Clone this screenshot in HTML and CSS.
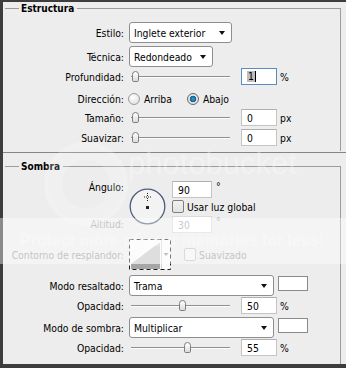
FILE: index.html
```html
<!DOCTYPE html>
<html lang="es">
<head>
<meta charset="utf-8">
<title>Estilo de capa</title>
<link rel="stylesheet" href="styles.css">
</head>
<body>
<div class="window">
  <div class="panel">
    <section class="group group-top">
      <div class="group-head"><span class="group-title">Estructura</span></div>

      <div class="row row-estilo">
        <span class="label">Estilo:</span>
        <div class="select select-estilo"><span>Inglete exterior</span><i class="caret"></i></div>
      </div>

      <div class="row row-tecnica">
        <span class="label">Técnica:</span>
        <div class="select select-tecnica"><span>Redondeado</span><i class="caret"></i></div>
      </div>

      <div class="row row-slider row-first">
        <span class="label">Profundidad:</span>
        <div class="slider"><span class="thumb" style="left:1px"></span></div>
        <div class="field field-focus"><span class="sel">1</span><span class="cursor"></span></div>
        <span class="unit">%</span>
      </div>

      <div class="row row-dir">
        <span class="label">Dirección:</span>
        <div class="radios">
          <span class="radio"></span><span class="radio-text">Arriba</span>
          <span class="radio radio-on"></span><span class="radio-text">Abajo</span>
        </div>
      </div>

      <div class="row row-slider row-size">
        <span class="label">Tamaño:</span>
        <div class="slider"><span class="thumb" style="left:1px"></span></div>
        <div class="field">0</div>
        <span class="unit">px</span>
      </div>

      <div class="row row-slider row-soft">
        <span class="label">Suavizar:</span>
        <div class="slider"><span class="thumb" style="left:1px"></span></div>
        <div class="field">0</div>
        <span class="unit">px</span>
      </div>
    </section>

    <div class="divider"></div>

    <section class="group group-bottom">
      <div class="group-head"><span class="group-title">Sombra</span></div>

      <div class="angle-block">
        <span class="label angle-label">Ángulo:</span>
        <div class="dial">
          <svg width="37" height="37" viewBox="0 0 37 37">
            <circle cx="18.5" cy="18.5" r="17.3" fill="#f3f3f3" stroke="#4e5d7e" stroke-width="1.3"/>
            <g fill="#222">
              <rect x="18" y="5" width="1" height="1"/>
              <rect x="18" y="7" width="1" height="1"/>
              <rect x="18" y="10" width="1" height="1"/>
              <rect x="18" y="12" width="1" height="1"/>
              <rect x="15" y="8.5" width="1" height="1"/>
              <rect x="17" y="8.5" width="1" height="1"/>
              <rect x="19" y="8.5" width="1" height="1"/>
              <rect x="21" y="8.5" width="1" height="1"/>
              <rect x="17" y="18" width="3" height="3"/>
            </g>
          </svg>
        </div>
        <div class="angle-input">
          <div class="field field-wide">90</div><span class="deg">°</span>
        </div>
        <div class="angle-check">
          <span class="check"></span><span class="check-text">Usar luz global</span>
        </div>
        <span class="label label-off alt-label">Altitud:</span>
        <div class="alt-input">
          <div class="field field-wide field-off">30</div><span class="deg deg-off">°</span>
        </div>
      </div>

      <div class="row row-contour">
        <span class="label label-off">Contorno de resplandor:</span>
        <div class="contour">
          <svg width="42" height="31" viewBox="0 0 42 31">
            <rect x="0.5" y="0.5" width="41" height="30" fill="#fbfbfb" stroke="#1e1e1e" stroke-dasharray="4 3"/>
            <polygon points="2,25 31,3 31,25" fill="#c8c8c8"/>
            <rect x="2" y="25" width="29" height="5" fill="#a6a6a6"/>
            <line x1="32.5" y1="1" x2="32.5" y2="30" stroke="#d6d6d6"/>
            <polygon points="34.5,14 39.5,14 37,17" fill="#9a9a9a"/>
          </svg>
        </div>
        <span class="check check-off"></span><span class="check-text text-off">Suavizado</span>
      </div>

      <div class="row row-mode">
        <span class="label">Modo resaltado:</span>
        <div class="select select-mode"><span>Trama</span><i class="caret"></i></div>
        <span class="swatch"></span>
      </div>

      <div class="row row-slider row-op">
        <span class="label">Opacidad:</span>
        <div class="slider"><span class="thumb" style="left:48px"></span></div>
        <div class="field">50</div>
        <span class="unit">%</span>
      </div>

      <div class="row row-mode row-mode2">
        <span class="label">Modo de sombra:</span>
        <div class="select select-mode"><span>Multiplicar</span><i class="caret"></i></div>
        <span class="swatch"></span>
      </div>

      <div class="row row-slider row-op">
        <span class="label">Opacidad:</span>
        <div class="slider"><span class="thumb" style="left:53px"></span></div>
        <div class="field">55</div>
        <span class="unit">%</span>
      </div>
    </section>
  </div>

  <div class="wm-rings"></div>
  <div class="wm-logo">photobucket</div>
  <div class="wm-band"><span>Protect more of your memories for less!</span></div>
</div>
</body>
</html>
```

FILE: styles.css
```css
* { box-sizing: border-box; }

html, body {
  margin: 0;
  padding: 0;
}

body {
  background: #3d3d3d;
  font-family: "DejaVu Sans Condensed", "DejaVu Sans", sans-serif;
  font-size: 10.3px;
  color: #000;
}

.window {
  position: relative;
  width: 346px;
  height: 368px;
  padding: 2px 0 4px 3px;
  background: #3d3d3d;
  overflow: hidden;
}

.panel {
  height: 100%;
  background: #ededed;
  display: flex;
  flex-direction: column;
}

/* group boxes */
.group {
  margin: 6px 5px 0 2px;
  border-right: 1px solid #9c9c9c;
}

.group-top { padding-bottom: 5px; }

.group-bottom {
  flex: 1;
  margin-top: 13px;
}

.group-head {
  display: flex;
  align-items: center;
  height: 13px;
  margin-top: -6px;
}

.group-head::before {
  content: "";
  width: 14px;
  border-top: 1px solid #9c9c9c;
}

.group-head::after {
  content: "";
  flex: 1;
  border-top: 1px solid #9c9c9c;
}

.group-title {
  font-weight: bold;
  font-size: 10px;
  line-height: 13px;
  padding: 0 3px 0 2px;
}

.divider {
  height: 1px;
  margin-top: 1px;
  background: #858585;
}

/* rows */
.row {
  display: flex;
  align-items: center;
}

.label {
  flex: none;
  width: 119px;
  margin-right: 5px;
  text-align: right;
  white-space: nowrap;
}

.label-off { color: #9d9d9d; }

.row-estilo { margin-top: 7px; height: 21px; }
.row-tecnica { margin-top: 3px; height: 21px; }
.row-first { margin-top: 1px; }
.row-dir { margin-top: 6px; height: 16px; }
.row-size { margin-top: 2px; }
.row-soft { margin-top: 3px; }
.row-slider { height: 17px; }
.row-op { margin-top: 1px; }
.row-contour { margin-top: 7px; height: 31px; }
.row-mode { margin-top: 5px; height: 21px; align-items: flex-start; }
.row-mode .label { align-self: center; }
.row-mode2 { margin-top: 3px; }

/* dropdowns */
.select {
  position: relative;
  height: 21px;
  display: flex;
  align-items: center;
  padding-left: 4px;
  background: #fff;
  border: 1px solid #8e8e8e;
  border-radius: 3px;
  white-space: nowrap;
}

.select-estilo { width: 103px; }
.select-tecnica { width: 84px; }
.select-mode { width: 145px; }

.caret {
  position: absolute;
  right: 6px;
  top: 8px;
  width: 0;
  height: 0;
  border-left: 3.5px solid transparent;
  border-right: 3.5px solid transparent;
  border-top: 4px solid #111;
}

.swatch {
  width: 30px;
  height: 15px;
  margin: 1px 0 0 4px;
  background: #fff;
  border: 1px solid #8a8a8a;
}

/* sliders */
.slider {
  position: relative;
  width: 99px;
  height: 13px;
  margin-left: 2px;
}

.slider::before {
  content: "";
  position: absolute;
  left: 0;
  right: 0;
  top: 6px;
  border-top: 1px solid #8f8f8f;
  border-bottom: 1px solid #fdfdfd;
}

.thumb {
  position: absolute;
  top: 1px;
  width: 7px;
  height: 11px;
  border: 1px solid #7d7d7d;
  border-radius: 4px 4px 2px 2px;
  background: linear-gradient(#ffffff, #dcdcdc);
}

/* text fields */
.field {
  width: 36px;
  height: 17px;
  margin-left: 11px;
  padding-left: 5px;
  display: flex;
  align-items: center;
  background: #fff;
  border: 1px solid #c4c4c4;
  border-top-color: #b0b0b0;
}

.field-focus { border-color: #5a8cc2; }

.sel {
  background: #bdbdbd;
  padding: 0 1px;
  line-height: 11px;
}

.cursor {
  width: 1px;
  height: 11px;
  background: #000;
}

.field-wide {
  width: 40px;
  margin-left: 0;
}

.field-off {
  color: #a5a5a5;
  border-color: #dadada;
}

.unit { margin-left: 3px; }

/* radios */
.radios {
  display: flex;
  align-items: center;
  margin-left: -1px;
}

.radio {
  width: 12px;
  height: 12px;
  border-radius: 50%;
  border: 1px solid #9b9b9b;
  background: radial-gradient(circle at 40% 35%, #ffffff, #d9d9d9);
}

.radio-on {
  margin-left: 15px;
  border-color: #6a6a6a;
  background: radial-gradient(circle, #3aa0d0 0, #12618e 3px, #e9e9e9 3.6px, #cfcfcf 100%);
}

.radio-text { margin-left: 4px; }

/* angle */
.angle-block {
  margin-top: 8px;
  display: grid;
  grid-template-columns: 119px 38px 1fr;
  grid-template-rows: 16px 17px 16px;
  column-gap: 5px;
  row-gap: 1px;
}

.angle-label {
  grid-column: 1;
  grid-row: 1;
  align-self: start;
  line-height: 12px;
  margin: 0;
}

.dial {
  grid-column: 2;
  grid-row: 1 / 4;
  align-self: center;
  height: 37px;
}

.dial svg { display: block; }

.angle-input,
.alt-input {
  grid-column: 3;
  display: flex;
  align-items: flex-start;
}

.angle-input { grid-row: 1; }
.alt-input { grid-row: 3; }

.deg {
  margin-left: 4px;
  line-height: 10px;
}

.deg-off { color: #a5a5a5; }

.angle-check {
  grid-column: 3;
  grid-row: 2;
  display: flex;
  align-items: center;
}

.alt-label {
  grid-column: 1;
  grid-row: 3;
  align-self: center;
  margin: 0;
}

.check {
  width: 12px;
  height: 13px;
  border: 1px solid #7e7e7e;
  border-radius: 2px;
  background: linear-gradient(#f2f2f2, #e2e2e2);
}

.check-off {
  margin-left: 13px;
  border-color: #c2c2c2;
  background: #f4f4f4;
}

.check-text { margin-left: 3px; }
.text-off { color: #9d9d9d; }

.contour { height: 31px; }
.contour svg { display: block; }

/* photobucket watermark */
.wm-rings {
  position: absolute;
  left: 44px;
  top: 142px;
  width: 84px;
  height: 84px;
  border-radius: 50%;
  border: 5px solid rgba(255, 255, 255, 0.22);
  box-shadow: inset 0 0 0 9px transparent, inset 0 0 0 13px rgba(255, 255, 255, 0.18);
}

.wm-logo {
  position: absolute;
  left: 128px;
  top: 146px;
  font-family: "Liberation Sans", Arial, sans-serif;
  font-size: 31px;
  color: rgba(255, 255, 255, 0.32);
}

.wm-band {
  position: absolute;
  left: 0;
  right: 0;
  top: 218px;
  height: 46px;
  display: flex;
  align-items: center;
  padding-left: 20px;
  background: rgba(255, 255, 255, 0.4);
  font-family: "Liberation Sans", Arial, sans-serif;
  font-weight: bold;
  font-size: 16px;
  color: rgba(255, 255, 255, 0.35);
  white-space: nowrap;
}
```
